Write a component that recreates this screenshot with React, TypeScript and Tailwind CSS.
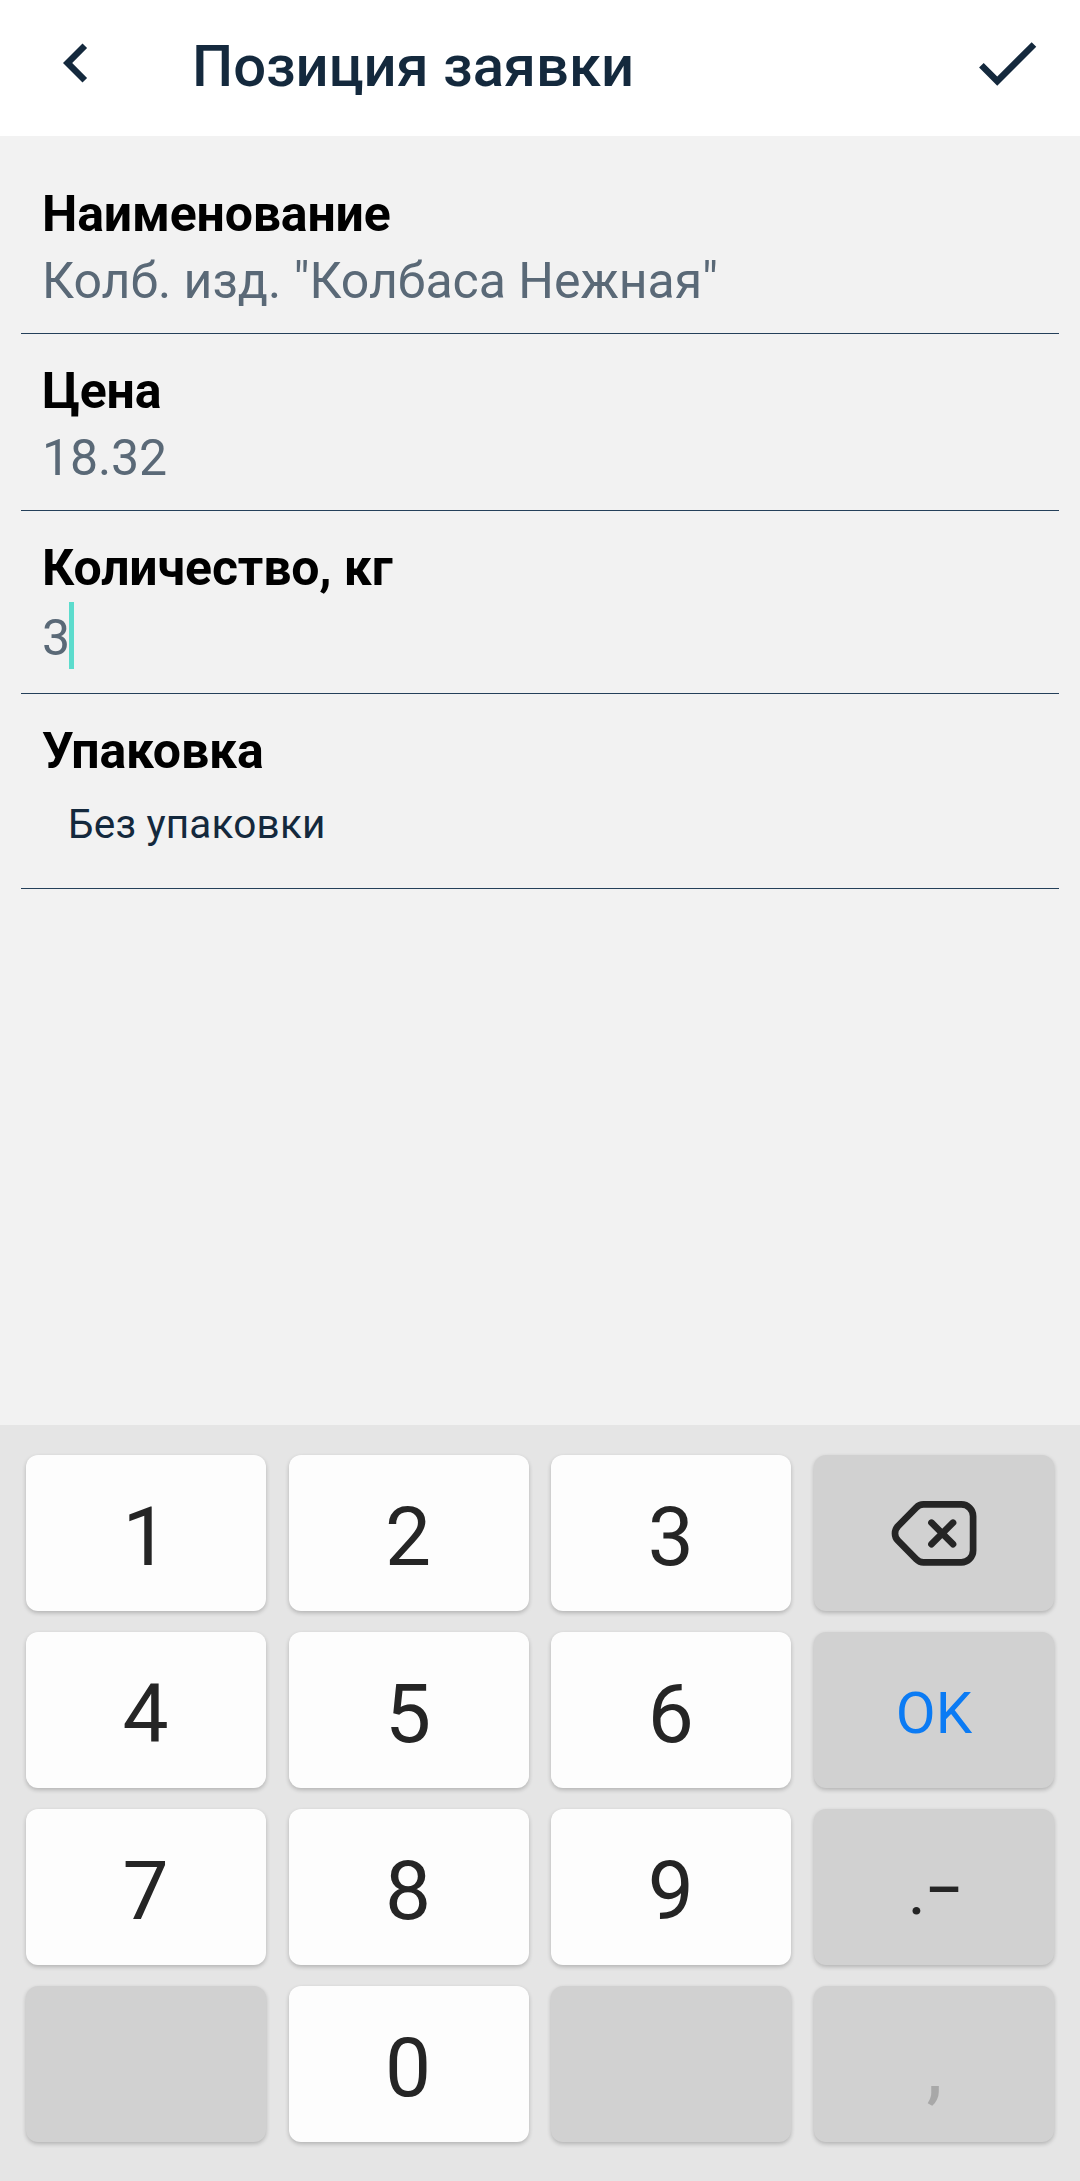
import type { ReactNode } from 'react';

type FieldProps = { label: string; className: string; children: ReactNode };

function Field({ label, className, children }: FieldProps) {
  return (
    <section className={`mx-[21px] border-b border-[#24405a] px-[21px] pt-6 ${className}`}>
      <h2 className="text-[50px] font-bold leading-[67px] tracking-[-0.16px] text-black">{label}</h2>
      {children}
    </section>
  );
}

type KeyProps = { muted?: boolean; className?: string; children?: ReactNode };

function Key({ muted = false, className = '', children }: KeyProps) {
  return (
    <button
      type="button"
      className={`flex h-[156px] items-center justify-center rounded-xl shadow-[0_2px_4px_rgba(0,0,0,0.22)] ${
        muted ? 'bg-[#d1d1d1]' : 'bg-[#fdfdfd]'
      } ${className}`}
    >
      {children}
    </button>
  );
}

function Digit({ value }: { value: string }) {
  return (
    <Key>
      <span className="pr-px pt-2 text-[82px] leading-none text-[#252525]">{value}</span>
    </Key>
  );
}

function BackspaceIcon() {
  return (
    <svg width="88" height="69" viewBox="0 0 88 69" fill="none" stroke="#252525" strokeWidth="6.7" strokeLinecap="round" strokeLinejoin="round">
      <path d="M33.5 5.4H71.3A11.8 11.8 0 0 1 83.1 17.2V51.6A11.8 11.8 0 0 1 71.3 63.4H33.5C30.5 63.4 28.3 62.3 26.2 60.2L8 41.7C4 37.6 4 31.2 8 27.1L26.2 8.6C28.3 6.5 30.5 5.4 33.5 5.4Z" />
      <path d="M41.5 23.7L63 45.2M63 23.7L41.5 45.2" />
    </svg>
  );
}

export default function App() {
  return (
    <div className="flex h-[2181px] w-[1080px] flex-col overflow-hidden bg-[#f2f2f2] font-['Roboto',sans-serif]">
      <header className="flex h-[136px] shrink-0 items-start bg-white pl-[37px] pr-[34px] pt-6 text-[#14293d]">
        <svg width="78" height="78" viewBox="0 0 24 24" fill="currentColor">
          <path d="M15.41 7.41L14 6l-6 6 6 6 1.41-1.41L10.83 12z" />
        </svg>
        <h1 className="ml-[77px] flex-1 text-[58px] font-medium leading-[84px] tracking-[-0.05px]">Позиция заявки</h1>
        <svg width="78" height="78" viewBox="0 0 24 24" fill="currentColor">
          <path d="M9 16.17L4.83 12l-1.42 1.41L9 19 21 7l-1.41-1.41z" />
        </svg>
      </header>

      <main className="flex-1 pt-[21px]">
        <Field label="Наименование" className="h-[177px]">
          <p className="text-[50px] leading-[67px] tracking-[-0.03px] text-[#5a6977]">Колб. изд. "Колбаса Нежная"</p>
        </Field>
        <Field label="Цена" className="h-[177px]">
          <p className="text-[50px] leading-[67px] tracking-[-0.1px] text-[#5a6977]">18.32</p>
        </Field>
        <Field label="Количество, кг" className="h-[183px]">
          <div className="flex h-[67px]">
            <span className="w-[27px] pt-[3px] text-[50px] leading-[67px] text-[#5a6977]">3</span>
            <span className="w-[5px] bg-[#5cdccd]" />
          </div>
        </Field>
        <Field label="Упаковка" className="h-[195px]">
          <p className="pl-[26px] pt-3 text-[40.5px] leading-[54px] tracking-[0.2px] text-[#14293d]">Без упаковки</p>
        </Field>
      </main>

      <div className="grid h-[756px] shrink-0 grid-cols-4 content-start gap-x-[22.67px] gap-y-[21px] bg-[#e5e5e5] px-[26px] pt-[30px]">
        <Digit value="1" />
        <Digit value="2" />
        <Digit value="3" />
        <Key muted>
          <BackspaceIcon />
        </Key>
        <Digit value="4" />
        <Digit value="5" />
        <Digit value="6" />
        <Key muted>
          <span className="pt-1.5 text-[58px] leading-none text-[#0b7bf4]">OK</span>
        </Key>
        <Digit value="7" />
        <Digit value="8" />
        <Digit value="9" />
        <Key muted>
          <span className="flex pl-[3px] text-[57px] font-medium leading-none text-[#252525]">
            <span className="pt-[14px]">.</span>
            <span className="ml-px pt-2.5">–</span>
          </span>
        </Key>
        <Key muted />
        <Digit value="0" />
        <Key muted />
        <Key muted>
          <span className="pl-px pt-3 text-[72px] font-medium leading-none text-[#a8a8a8]">,</span>
        </Key>
      </div>
    </div>
  );
}
